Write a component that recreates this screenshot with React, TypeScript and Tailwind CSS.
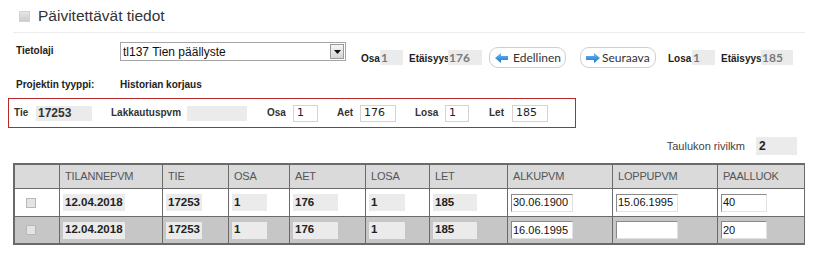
import React from "react";

const LBL = "font-['Liberation_Sans',Arial,sans-serif] font-bold text-[10px] leading-[12px] text-[#222]";

function ArrowLeft() {
  return (
    <svg width="13" height="10" viewBox="0 0 13 10">
      <defs>
        <linearGradient id="gl" x1="0" y1="0" x2="0" y2="1">
          <stop offset="0" stopColor="#6bbcf5" />
          <stop offset="1" stopColor="#1a72c8" />
        </linearGradient>
      </defs>
      <path d="M13 3 H6 V0 L0 5 L6 10 V7 H13 Z" fill="url(#gl)" />
    </svg>
  );
}

function ArrowRight() {
  return (
    <svg width="14" height="10" viewBox="0 0 14 10">
      <defs>
        <linearGradient id="gr" x1="0" y1="0" x2="0" y2="1">
          <stop offset="0" stopColor="#6bbcf5" />
          <stop offset="1" stopColor="#1a72c8" />
        </linearGradient>
      </defs>
      <path d="M0 3 H8 V0 L14 5 L8 10 V7 H0 Z" fill="url(#gr)" />
    </svg>
  );
}

function CellBox({ className, children }: { className: string; children: React.ReactNode }) {
  return (
    <div className={`h-[17px] bg-[#ebebeb] flex items-center pl-[2px] font-['Liberation_Sans',Arial,sans-serif] font-bold text-[11.5px] text-[#222] ${className}`}>
      {children}
    </div>
  );
}

function CellInput({ className, value }: { className: string; value: string }) {
  return (
    <div className={`h-[18px] bg-white border-t border-l border-t-[#8a8a8a] border-l-[#8a8a8a] border-r border-b border-r-[#e2e2e2] border-b-[#e2e2e2] flex items-center pl-[1px] font-['Liberation_Sans',Arial,sans-serif] text-[11px] text-[#111] ${className}`}>
      {value}
    </div>
  );
}

function RowCheck() {
  return <div className="w-[10px] h-[10px] border border-[#b8b8b8] bg-[#e4e4e4] ml-[8px]" />;
}

function DataRow({ bg, h, alku, loppu, paal }: { bg: string; h: string; alku: string; loppu: string; paal: string }) {
  const td = `border border-[#6a6a6a] px-[3px] ${h}`;
  return (
    <tr className={bg}>
      <td className={td}><RowCheck /></td>
      <td className={td}><CellBox className="w-[62px]">12.04.2018</CellBox></td>
      <td className={td}><CellBox className="w-[36px]">17253</CellBox></td>
      <td className={td}><CellBox className="w-[35px]">1</CellBox></td>
      <td className={td}><CellBox className="w-[45px]">176</CellBox></td>
      <td className={td}><CellBox className="w-[36px]">1</CellBox></td>
      <td className={td}><CellBox className="w-[44px]">185</CellBox></td>
      <td className={td}><CellInput className="w-[62px]" value={alku} /></td>
      <td className={td}><CellInput className="w-[62px]" value={loppu} /></td>
      <td className={td}><CellInput className="w-[46px]" value={paal} /></td>
    </tr>
  );
}

export default function App() {
  const th = "border border-[#6a6a6a] h-[24px] px-[5px] text-left font-normal font-['Liberation_Sans_Narrow','Liberation_Sans',sans-serif] text-[11px] text-[#555] tracking-[-0.2px]";
  const grayVal = "h-[15px] bg-[#ebebeb] flex items-center pl-[1px] font-['Lato',sans-serif] font-bold text-[12px] text-[#7a7a7a]";
  const redIn = "h-[17px] bg-white border border-[#d4d4d4] flex items-center pl-[3px] font-['DejaVu_Sans','Liberation_Sans',sans-serif] text-[11px] text-[#222]";
  return (
    <div className="w-[818px] h-[258px] bg-white overflow-hidden font-['Liberation_Sans',Arial,sans-serif]">
      {/* title */}
      <div className="mx-[13px] h-[33px] border-b border-[#ececec] flex items-center pl-[6px]">
        <div className="w-[11px] h-[11px] border border-[#d2d2d2] bg-gradient-to-b from-[#e6e6e6] to-[#cdcdcd]" />
        <div className="ml-[8px] text-[15.5px] text-[#333] leading-[18px]">Päivitettävät tiedot</div>
      </div>

      {/* row 1 */}
      <div className="flex items-start pl-[16px] mt-[9px] h-[27px]">
        <div className={`${LBL} w-[104px] mt-[3px]`}>Tietolaji</div>
        <div className="w-[226px] h-[19px] border border-[#a5a5a5] bg-white flex items-center justify-between">
          <span className="pl-[2px] text-[12px] text-[#111]">tl137 Tien päällyste</span>
          <div className="w-[14px] h-[15px] mr-[1px] border border-[#9a9a9a] bg-gradient-to-b from-[#f6f6f6] to-[#d6d6d6] flex items-center justify-center">
            <svg width="7" height="4" viewBox="0 0 7 4"><path d="M0 0 H7 L3.5 4 Z" fill="#111" /></svg>
          </div>
        </div>
        <div className="flex items-center ml-[15px] mt-[8px] h-[15px]">
          <div className={`${LBL} w-[19px] mt-[2px]`}>Osa</div>
          <div className={`${grayVal} w-[23px]`}>1</div>
          <div className={`${LBL} w-[39px] ml-[6px] mt-[2px]`}>Etäisyys</div>
          <div className={`${grayVal} w-[34px]`}>176</div>
        </div>
        <div className="ml-[7px] mt-[5px] w-[77px] h-[21px] rounded-[9px] border border-[#cfcfcf] bg-white flex items-center pl-[5px] font-['Lato',sans-serif] text-[12px] text-[#333]">
          <ArrowLeft />
          <span className="ml-[5px]">Edellinen</span>
        </div>
        <div className="ml-[14px] mt-[5px] w-[76px] h-[21px] rounded-[9px] border border-[#cfcfcf] bg-white flex items-center pl-[5px] font-['Lato',sans-serif] text-[12px] text-[#333]">
          <ArrowRight />
          <span className="ml-[2px]">Seuraava</span>
        </div>
        <div className="flex items-center ml-[12px] mt-[8px] h-[15px]">
          <div className={`${LBL} w-[24px] mt-[2px]`}>Losa</div>
          <div className={`${grayVal} w-[23px]`}>1</div>
          <div className={`${LBL} w-[40px] ml-[6px] mt-[2px]`}>Etäisyys</div>
          <div className={`${grayVal} w-[32px]`}>185</div>
        </div>
      </div>

      {/* row 2 */}
      <div className="flex pl-[16px] mt-[10px] h-[12px]">
        <div className={`${LBL} w-[104px]`}>Projektin tyyppi:</div>
        <div className={LBL}>Historian korjaus</div>
      </div>

      {/* red box */}
      <div className="ml-[8px] mt-[7px] w-[568px] h-[30px] border border-[#b8282b] flex items-center pl-[5px]">
        <div className={`${LBL} text-[#333] w-[22px]`}>Tie</div>
        <div className="w-[56px] h-[15px] bg-[#ebebeb] flex items-center pl-[2px] font-bold text-[12px] text-[#333]">17253</div>
        <div className={`${LBL} text-[#333] ml-[19px] w-[76px]`}>Lakkautuspvm</div>
        <div className="w-[60px] h-[15px] bg-[#ebebeb]" />
        <div className={`${LBL} text-[#333] ml-[20px] w-[26px]`}>Osa</div>
        <div className={`${redIn} w-[25px]`}>1</div>
        <div className={`${LBL} text-[#333] ml-[19px] w-[23px]`}>Aet</div>
        <div className={`${redIn} w-[36px]`}>176</div>
        <div className={`${LBL} text-[#333] ml-[19px] w-[30px]`}>Losa</div>
        <div className={`${redIn} w-[24px]`}>1</div>
        <div className={`${LBL} text-[#333] ml-[20px] w-[23px]`}>Let</div>
        <div className={`${redIn} w-[36px]`}>185</div>
      </div>

      {/* rivilkm */}
      <div className="flex justify-end items-center pr-[21px] mt-[9px] h-[18px]">
        <div className="font-['Liberation_Sans_Narrow','Liberation_Sans',sans-serif] text-[11px] text-[#444] mr-[11px]">Taulukon rivilkm</div>
        <div className="w-[41px] h-[18px] bg-[#ebebeb] flex items-center pl-[3px] font-bold text-[12px] text-[#222]">2</div>
      </div>

      {/* table */}
      <div className="ml-[13px] mt-[8px] w-[792px] border border-[#6a6a6a]">
        <table className="table-fixed w-[790px] border-collapse">
          <colgroup>
            <col className="w-[45px]" />
            <col className="w-[103px]" />
            <col className="w-[66px]" />
            <col className="w-[61px]" />
            <col className="w-[76px]" />
            <col className="w-[64px]" />
            <col className="w-[78px]" />
            <col className="w-[105px]" />
            <col className="w-[105px]" />
            <col className="w-[87px]" />
          </colgroup>
          <thead>
            <tr className="bg-[#dadada]">
              <th className={th}></th>
              <th className={th}>TILANNEPVM</th>
              <th className={th}>TIE</th>
              <th className={th}>OSA</th>
              <th className={th}>AET</th>
              <th className={th}>LOSA</th>
              <th className={th}>LET</th>
              <th className={th}>ALKUPVM</th>
              <th className={th}>LOPPUPVM</th>
              <th className={th}>PAALLUOK</th>
            </tr>
          </thead>
          <tbody>
            <DataRow bg="bg-white" h="h-[28px]" alku="30.06.1900" loppu="15.06.1995" paal="40" />
            <DataRow bg="bg-[#c6c6c6]" h="h-[27px]" alku="16.06.1995" loppu="" paal="20" />
          </tbody>
        </table>
      </div>
    </div>
  );
}
